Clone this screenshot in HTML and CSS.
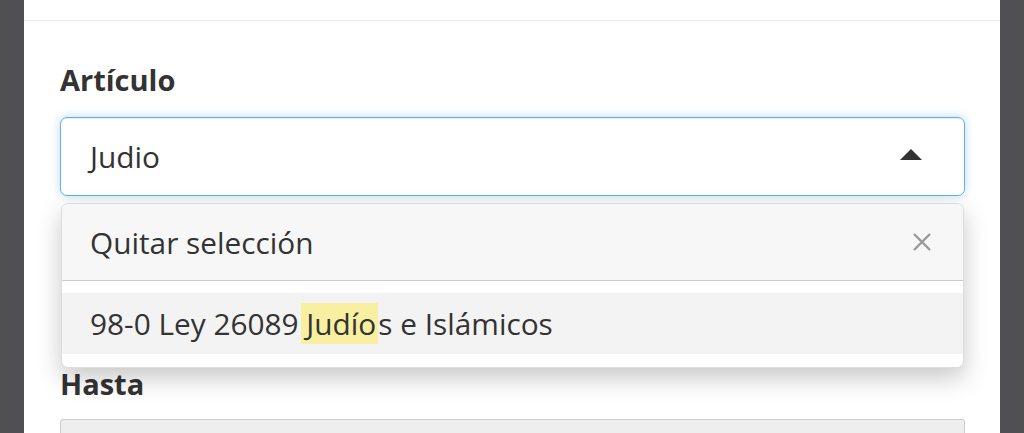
FILE: index.html
```html
<!DOCTYPE html>
<html lang="es">
<head>
<meta charset="utf-8">
<title>Artículo</title>
<link rel="stylesheet" href="styles.css">
</head>
<body>
<div class="side"></div>
<main class="panel">
  <div class="panel-head"></div>
  <div class="panel-body">
    <div class="form-group">
      <label class="label">Artículo</label>
      <div class="select-wrap">
        <div class="select">
          <span class="select-value">Judio</span>
          <svg class="caret" width="22" height="11" viewBox="0 0 22 11"><path d="M0 11 L11 0 L22 11 Z" fill="#333"/></svg>
        </div>
        <div class="dropdown">
          <div class="clear-row">
            <span>Quitar selección</span>
            <svg class="close" width="20" height="20" viewBox="0 0 20 20"><path d="M2 2 L18 18 M18 2 L2 18" stroke="#999" stroke-width="2.4" fill="none"/></svg>
          </div>
          <ul class="options">
            <li class="option active">98-0 Ley 26089 <mark class="hl">Judío</mark>s e Islámicos</li>
          </ul>
        </div>
      </div>
    </div>
    <div class="form-group hasta">
      <label class="label">Hasta</label>
      <div class="input-disabled"></div>
    </div>
  </div>
</main>
<div class="side"></div>
</body>
</html>
```
FILE: styles.css
```css
* { box-sizing: border-box; }
html, body { margin: 0; padding: 0; height: 100%; }
body {
  display: flex;
  background: #505052;
  font-family: "Open Sans", "Noto Sans", sans-serif;
  color: #333;
  overflow: hidden;
}
.side { width: 24px; flex: none; background: #505052; }
.panel { flex: 1; background: #fff; height: 100%; overflow: hidden; }
.panel-head { height: 21px; border-bottom: 1px solid #ececec; }
.panel-body { padding: 42px 35px 0 36px; }
.label {
  display: block;
  font-weight: 700;
  font-size: 29px;
  line-height: 34px;
  margin-bottom: 20px;
  color: #333;
}
.select-wrap { position: relative; }
.select {
  height: 79px;
  border: 1px solid #66afe9;
  border-radius: 7px;
  box-shadow: inset 0 1px 1px rgba(0,0,0,.075), 0 0 10px rgba(102,175,233,.45);
  display: flex;
  align-items: center;
  justify-content: space-between;
  padding: 0 42px 0 29px;
  font-size: 29.8px;
  background: #fff;
}
.caret { display: block; margin-top: -4px; }
.dropdown {
  position: absolute;
  z-index: 10;
  left: 1px;
  right: 1px;
  top: 86px;
  background: #fff;
  border: 1px solid #ddd;
  border-radius: 7px;
  box-shadow: 0 10px 24px rgba(0,0,0,.22);
  overflow: hidden;
  font-size: 29.8px;
}
.clear-row {
  height: 77px;
  background: #f7f7f7;
  border-bottom: 1px solid #ccc;
  display: flex;
  align-items: center;
  justify-content: space-between;
  padding: 0 31px 0 28px;
}
.close { display: block; }
.options { list-style: none; margin: 0; padding: 12px 0 13px; }
.option {
  height: 61px;
  display: flex;
  align-items: center;
  padding: 0 28px;
  white-space: pre;
}
.option.active { background: #f3f3f3; }
.hl { background: #f8f0a0; color: inherit; padding: 0 2px 0 5px; margin-left: -5px; }
.hasta { margin-top: 171px; }
.hasta .label { margin-bottom: 18px; }
.input-disabled {
  height: 60px;
  background: #eee;
  border: 1px solid #ccc;
  border-radius: 3px;
}
```
